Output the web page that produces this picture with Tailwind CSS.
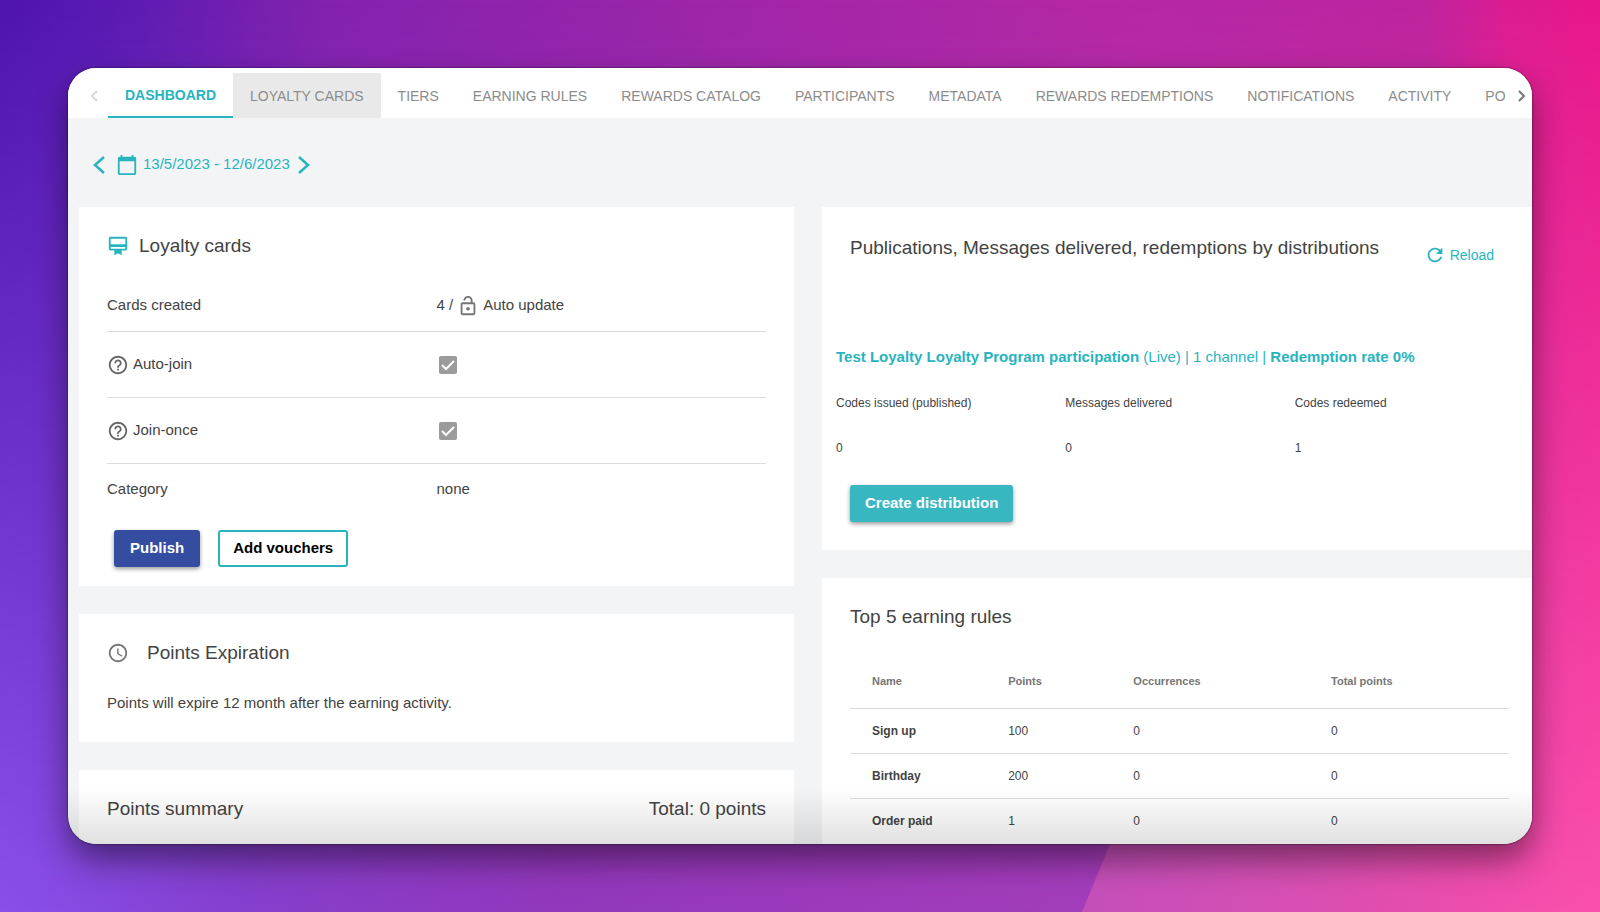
<!DOCTYPE html>
<html lang="en">

<head>
  <meta charset="UTF-8" />
  <meta name="viewport" content="width=device-width, initial-scale=1.0" />
  <title>Loyalty Program Dashboard</title>
  <script src="https://cdn.jsdelivr.net/npm/@tailwindcss/browser@4"></script>
</head>

<body class="relative h-screen overflow-hidden bg-[#9a30b4] p-[68px] font-['Liberation_Sans',Arial,sans-serif] text-[#434343]">
  <!-- Background -->
  <svg class="absolute inset-0 h-full w-full" viewBox="0 0 1600 912" preserveAspectRatio="none" aria-hidden="true">
    <defs>
      <linearGradient id="top" x1="0" x2="1600" y1="0" y2="0" gradientUnits="userSpaceOnUse">
        <stop offset="0" stop-color="#4e14b0" />
        <stop offset="0.08" stop-color="#5c1bb2" />
        <stop offset="0.2" stop-color="#8222ae" />
        <stop offset="0.5" stop-color="#a426a8" />
        <stop offset="0.7" stop-color="#b528a4" />
        <stop offset="0.89" stop-color="#bd249f" />
        <stop offset="0.94" stop-color="#dc1c92" />
        <stop offset="1" stop-color="#e8178b" />
      </linearGradient>
      <linearGradient id="bottom" x1="0" x2="1" y1="0" y2="0">
        <stop offset="0" stop-color="#8850ea" />
        <stop offset="0.15" stop-color="#853fcd" />
        <stop offset="0.35" stop-color="#9238bb" />
        <stop offset="0.68" stop-color="#a23dbb" />
        <stop offset="0.85" stop-color="#e04bad" />
        <stop offset="1" stop-color="#fb50ac" />
      </linearGradient>
      <linearGradient id="fade" x1="0" x2="0" y1="0" y2="1">
        <stop offset="0" stop-color="#000" />
        <stop offset="1" stop-color="#fff" />
      </linearGradient>
      <linearGradient id="wedge" x1="0" x2="1" y1="0" y2="0">
        <stop offset="0" stop-color="#c44fba" />
        <stop offset="0.5" stop-color="#d84fb2" />
        <stop offset="1" stop-color="#f44fac" stop-opacity="0" />
      </linearGradient>
      <mask id="down">
        <rect width="1600" height="912" fill="url(#fade)" />
      </mask>
    </defs>
    <rect width="1600" height="912" fill="url(#top)" />
    <rect width="1600" height="912" fill="url(#bottom)" mask="url(#down)" />
    <path d="M1082 912 L1120 820 L1540 820 V912 Z" fill="url(#wedge)" />
  </svg>

  <div class="relative flex h-full flex-col overflow-hidden rounded-[28px] bg-[#f2f4f6] shadow-[0_0_2px_rgba(0,0,0,0.8),0_16px_32px_rgba(0,0,0,0.45)]">
    <!-- Tabs -->
    <nav class="flex h-[50px] shrink-0 items-stretch bg-white pt-[5px] text-sm whitespace-nowrap text-[#8c8c8c]">
      <button class="flex w-10 shrink-0 items-center justify-center pl-3" aria-label="Previous tabs">
        <svg class="h-3 w-2" viewBox="0 0 8 12" fill="none" stroke="#d9d9d9" stroke-width="2"><path d="M7 1 2 6l5 5" /></svg>
      </button>
      <div class="flex min-w-0 flex-1 items-stretch overflow-hidden">
        <a href="#" class="flex items-center border-b-2 border-[#28b4be] px-[17px] font-bold text-[#28b4be]">DASHBOARD</a>
        <a href="#" class="flex items-center bg-[#e9e9e9] px-[17px]">LOYALTY CARDS</a>
        <a href="#" class="flex items-center px-[17px]">TIERS</a>
        <a href="#" class="flex items-center px-[17px]">EARNING RULES</a>
        <a href="#" class="flex items-center px-[17px]">REWARDS CATALOG</a>
        <a href="#" class="flex items-center px-[17px]">PARTICIPANTS</a>
        <a href="#" class="flex items-center px-[17px]">METADATA</a>
        <a href="#" class="flex items-center px-[17px]">REWARDS REDEMPTIONS</a>
        <a href="#" class="flex items-center px-[17px]">NOTIFICATIONS</a>
        <a href="#" class="flex items-center px-[17px]">ACTIVITY</a>
        <a href="#" class="flex items-center pl-[17px]">PO</a>
      </div>
      <button class="flex w-6 shrink-0 items-center justify-center pl-1" aria-label="Next tabs">
        <svg class="h-3 w-2" viewBox="0 0 8 12" fill="none" stroke="#767676" stroke-width="2"><path d="m1 1 5 5-5 5" /></svg>
      </button>
    </nav>

    <!-- Date range -->
    <div class="flex h-[89px] shrink-0 items-center pt-1 pl-[25px] text-[15px] text-[#28b4be]">
      <button aria-label="Previous period">
        <svg class="h-[18px] w-3" viewBox="0 0 12 18" fill="none" stroke="currentColor" stroke-width="2.500"><path d="m11 1-9 8 9 8" /></svg>
      </button>
      <button class="ml-[11px] flex items-center gap-[5px]">
        <svg class="size-[22px]" viewBox="0 0 24 24" fill="currentColor"><path d="M20 3h-1V1h-2v2H7V1H5v2H4c-1.100 0-2 .9-2 2v16c0 1.100.9 2 2 2h16c1.100 0 2-.9 2-2V5c0-1.100-.9-2-2-2zm0 18H4V8h16v13z" /></svg>
        13/5/2023 - 12/6/2023
      </button>
      <button class="ml-2" aria-label="Next period">
        <svg class="h-[18px] w-3" viewBox="0 0 12 18" fill="none" stroke="currentColor" stroke-width="2.500"><path d="m1 1 9 8-9 8" /></svg>
      </button>
    </div>

    <main class="grid grid-cols-[715fr_710fr] items-start gap-7 pl-[11px]">
      <div class="flex min-w-0 flex-col gap-7">
        <!-- Loyalty cards -->
        <section class="bg-white px-7 pb-[19px]">
          <h2 class="flex h-[78px] items-center gap-2.5 text-[19px]">
            <svg class="size-[22px] text-[#28b4be]" viewBox="0 0 24 24" fill="currentColor"><path d="M20 2H4c-1.110 0-2 .89-2 2v11c0 1.110.89 2 2 2h4v5l4-2 4 2v-5h4c1.110 0 2-.89 2-2V4c0-1.110-.89-2-2-2zm0 13H4v-2h16v2zm0-5H4V4h16v6z" /></svg>
            Loyalty cards
          </h2>
          <dl class="text-[15px]">
            <div class="grid h-[47px] grid-cols-2 items-center border-b border-[#dcdcdc] pb-[5px]">
              <dt>Cards created</dt>
              <dd class="flex items-center gap-1">4 /
                <svg class="size-[22px] text-[#767676]" viewBox="0 0 24 24" fill="currentColor"><path d="M18 8h-1V6c0-2.760-2.240-5-5-5S7 3.240 7 6h2c0-1.660 1.340-3 3-3s3 1.340 3 3v2H6c-1.100 0-2 .9-2 2v10c0 1.100.9 2 2 2h12c1.100 0 2-.9 2-2V10c0-1.100-.9-2-2-2zm0 12H6V10h12v10zm-6-3c1.100 0 2-.9 2-2s-.9-2-2-2-2 .9-2 2 .9 2 2 2z" /></svg>
                Auto update
              </dd>
            </div>
            <div class="grid h-[66px] grid-cols-2 items-center border-b border-[#dcdcdc]">
              <dt class="flex items-center gap-1">
                <svg class="size-[22px]" viewBox="0 0 24 24" fill="#666"><path d="M11 18h2v-2h-2v2zm1-16C6.480 2 2 6.480 2 12s4.480 10 10 10 10-4.480 10-10S17.520 2 12 2zm0 18c-4.410 0-8-3.590-8-8s3.590-8 8-8 8 3.590 8 8-3.590 8-8 8zm0-14c-2.210 0-4 1.790-4 4h2c0-1.100.9-2 2-2s2 .9 2 2c0 2-3 1.750-3 5h2c0-2.250 3-2.500 3-5 0-2.210-1.790-4-4-4z" /></svg>
                <label for="auto-join">Auto-join</label>
              </dt>
              <dd class="relative size-[22px]">
                <input id="auto-join" type="checkbox" checked disabled class="absolute inset-[2px] appearance-none rounded-[2px] bg-[#9b9b9b]" />
                <svg class="absolute inset-[2px] size-[18px]" viewBox="0 0 18 18" fill="none" stroke="#fff" stroke-width="2"><path d="m3 9 4 4 8-8" /></svg>
              </dd>
            </div>
            <div class="grid h-[66px] grid-cols-2 items-center border-b border-[#dcdcdc]">
              <dt class="flex items-center gap-1">
                <svg class="size-[22px]" viewBox="0 0 24 24" fill="#666"><path d="M11 18h2v-2h-2v2zm1-16C6.480 2 2 6.480 2 12s4.480 10 10 10 10-4.480 10-10S17.520 2 12 2zm0 18c-4.410 0-8-3.590-8-8s3.590-8 8-8 8 3.590 8 8-3.590 8-8 8zm0-14c-2.210 0-4 1.790-4 4h2c0-1.100.9-2 2-2s2 .9 2 2c0 2-3 1.750-3 5h2c0-2.250 3-2.500 3-5 0-2.210-1.790-4-4-4z" /></svg>
                <label for="join-once">Join-once</label>
              </dt>
              <dd class="relative size-[22px]">
                <input id="join-once" type="checkbox" checked disabled class="absolute inset-[2px] appearance-none rounded-[2px] bg-[#9b9b9b]" />
                <svg class="absolute inset-[2px] size-[18px]" viewBox="0 0 18 18" fill="none" stroke="#fff" stroke-width="2"><path d="m3 9 4 4 8-8" /></svg>
              </dd>
            </div>
            <div class="grid h-[50px] grid-cols-2 items-center">
              <dt>Category</dt>
              <dd>none</dd>
            </div>
          </dl>
          <div class="mt-4 flex gap-[18px] pl-[7px] text-[15px] font-bold">
            <button class="h-[37px] rounded-[3px] bg-[#344da1] px-4 text-white shadow-[0_2px_4px_rgba(0,0,0,0.4)]">Publish</button>
            <button class="h-[37px] rounded-[3px] border-2 border-[#28b4be] px-[13px] text-black">Add vouchers</button>
          </div>
        </section>

        <!-- Points expiration -->
        <section class="h-[128px] bg-white px-7">
          <h2 class="flex h-[78px] items-center gap-[18px] text-[19px]">
            <svg class="size-[22px]" viewBox="0 0 24 24" fill="#777"><path d="M12 2C6.500 2 2 6.500 2 12s4.500 10 10 10 10-4.500 10-10S17.500 2 12 2zm0 18c-4.410 0-8-3.590-8-8s3.590-8 8-8 8 3.590 8 8-3.590 8-8 8zm.5-13H11v6l5.200 3.200.8-1.300-4.500-2.700V7z" /></svg>
            Points Expiration
          </h2>
          <p class="text-[15px]">Points will expire 12 month after the earning activity.</p>
        </section>

        <!-- Points summary -->
        <section class="flex h-40 justify-between bg-white px-7 pt-[25px] text-[19px]">
          <h2>Points summary</h2>
          <p>Total: 0 points</p>
        </section>
      </div>

      <div class="flex min-w-0 flex-col gap-7">
        <!-- Distributions -->
        <section class="bg-white pb-7">
          <div class="flex h-[134px] items-start justify-between pt-[27px] pr-[38px] pl-7">
            <h2 class="text-[19px]">Publications, Messages delivered, redemptions by distributions</h2>
            <button class="mt-[10px] flex items-center gap-1 text-sm text-[#28b4be]">
              <svg class="size-[22px]" viewBox="0 0 24 24" fill="currentColor"><path d="M17.650 6.350C16.200 4.900 14.210 4 12 4c-4.420 0-7.990 3.580-7.990 8s3.570 8 7.990 8c3.730 0 6.840-2.550 7.730-6h-2.080c-.82 2.330-3.040 4-5.650 4-3.310 0-6-2.690-6-6s2.690-6 6-6c1.660 0 3.140.69 4.220 1.780L13 11h7V4l-2.350 2.350z" /></svg>
              Reload
            </button>
          </div>
          <div class="pr-2 pl-3.5">
            <a href="#" class="block text-[15px] leading-8 text-[#28b4be]"><b>Test Loyalty Loyalty Program participation</b> (Live) | 1 channel | <b>Redemption rate 0%</b></a>
            <dl class="grid h-[90px] grid-cols-3 pt-[21px] text-[12px]">
              <div><dt>Codes issued (published)</dt><dd class="pt-[27px]">0</dd></div>
              <div><dt>Messages delivered</dt><dd class="pt-[27px]">0</dd></div>
              <div><dt>Codes redeemed</dt><dd class="pt-[27px]">1</dd></div>
            </dl>
          </div>
          <button class="mt-[22px] ml-7 h-[37px] rounded-[3px] bg-[#38b7c1] px-[15px] text-[15px] font-bold text-white shadow-[0_2px_4px_rgba(0,0,0,0.4)]">Create distribution</button>
        </section>

        <!-- Earning rules -->
        <section class="bg-white pr-[23px] pb-7 pl-7">
          <h2 class="h-24 pt-[25px] text-[19px]">Top 5 earning rules</h2>
          <table class="w-full table-fixed text-left text-xs">
            <thead>
              <tr class="h-[34px] border-b border-[#dcdcdc] align-top text-[11px] text-[#767676]">
                <th class="w-[24%] pl-[22px]">Name</th>
                <th class="w-[19%]">Points</th>
                <th class="w-[30%]">Occurrences</th>
                <th>Total points</th>
              </tr>
            </thead>
            <tbody>
              <tr class="h-[45px] border-b border-[#dcdcdc]"><th class="pl-[22px]">Sign up</th><td>100</td><td>0</td><td>0</td></tr>
              <tr class="h-[45px] border-b border-[#dcdcdc]"><th class="pl-[22px]">Birthday</th><td>200</td><td>0</td><td>0</td></tr>
              <tr class="h-[45px]"><th class="pl-[22px]">Order paid</th><td>1</td><td>0</td><td>0</td></tr>
            </tbody>
          </table>
        </section>
      </div>
    </main>
    <div class="pointer-events-none absolute inset-x-0 bottom-0 h-14 bg-linear-to-b from-transparent to-black/12"></div>
  </div>
</body>

</html>
